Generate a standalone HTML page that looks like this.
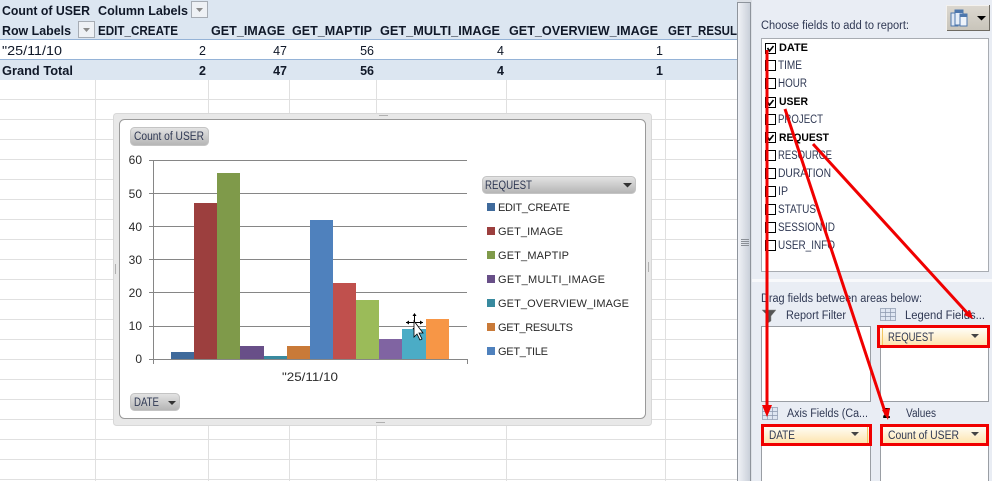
<!DOCTYPE html>
<html><head><meta charset="utf-8"><style>
html,body{margin:0;padding:0;background:#fff;width:992px;height:481px;overflow:hidden}
svg{display:block}
text{font-family:"Liberation Sans",sans-serif;font-size:12.5px;fill:#101828}
.b{font-weight:bold}
.c{fill:#2a2a2a;font-size:12px}
.l{fill:#2a2a2a;font-size:11px}
.f{fill:#2f3853;font-size:11.5px}
.k{fill:#000;font-size:11px;font-weight:bold}
</style></head><body>
<svg width="992" height="481" viewBox="0 0 992 481" xmlns="http://www.w3.org/2000/svg">
<defs>
<linearGradient id="pb" x1="0" y1="0" x2="0" y2="1"><stop offset="0" stop-color="#e4e4e4"/><stop offset="1" stop-color="#b4b4b4"/></linearGradient>
<linearGradient id="sb" x1="0" y1="0" x2="1" y2="0"><stop offset="0" stop-color="#f2f4f8"/><stop offset="1" stop-color="#c8ced8"/></linearGradient>
<linearGradient id="yb" x1="0" y1="0" x2="0" y2="1"><stop offset="0" stop-color="#fffef8"/><stop offset="1" stop-color="#fde3ab"/></linearGradient>
<linearGradient id="mb" x1="0" y1="0" x2="0" y2="1"><stop offset="0" stop-color="#dcd8d0"/><stop offset="1" stop-color="#c8c4ba"/></linearGradient>
</defs>
<rect width="992" height="481" fill="#fff"/>
<!-- grid -->
<g stroke="#e0e0e0" stroke-width="1">
<path d="M0 99.5H737M0 119.5H737M0 139.5H737M0 159.5H737M0 179.5H737M0 199.5H737M0 219.5H737M0 239.5H737M0 259.5H737M0 279.5H737M0 299.5H737M0 319.5H737M0 339.5H737M0 359.5H737M0 379.5H737M0 399.5H737M0 419.5H737M0 439.5H737M0 459.5H737M0 479.5H737"/>
<path d="M95.500 80V481M208.500 80V481M289.500 80V481M376.500 80V481M506.500 80V481M665.500 80V481"/>
</g>
<!-- pivot bands -->
<rect x="0" y="0" width="737" height="40" fill="#dce6f1"/>
<rect x="0" y="60" width="737" height="20" fill="#dce6f1"/>
<rect x="0" y="39" width="737" height="1" fill="#95b3d7"/>
<rect x="0" y="59" width="737" height="1" fill="#95b3d7"/>
<g>
<text class="b" x="2" y="15" textLength="88" lengthAdjust="spacingAndGlyphs">Count of USER</text>
<text class="b" x="98" y="15" textLength="90" lengthAdjust="spacingAndGlyphs">Column Labels</text>
<text class="b" x="2" y="35" textLength="69" lengthAdjust="spacingAndGlyphs">Row Labels</text>
<text class="b" x="98" y="35" textLength="80" lengthAdjust="spacingAndGlyphs">EDIT_CREATE</text>
<text class="b" x="211" y="35" textLength="74" lengthAdjust="spacingAndGlyphs">GET_IMAGE</text>
<text class="b" x="292" y="35" textLength="80" lengthAdjust="spacingAndGlyphs">GET_MAPTIP</text>
<text class="b" x="380" y="35" textLength="120" lengthAdjust="spacingAndGlyphs">GET_MULTI_IMAGE</text>
<text class="b" x="509" y="35" textLength="149" lengthAdjust="spacingAndGlyphs">GET_OVERVIEW_IMAGE</text>
<text class="b" x="668" y="35" textLength="69" lengthAdjust="spacingAndGlyphs">GET_RESUL</text>
<text x="2" y="55" textLength="60" lengthAdjust="spacingAndGlyphs">"25/11/10</text>
<text x="206" y="55" text-anchor="end">2</text><text x="287" y="55" text-anchor="end">47</text><text x="374" y="55" text-anchor="end">56</text><text x="504" y="55" text-anchor="end">4</text><text x="663" y="55" text-anchor="end">1</text>
<text class="b" x="2" y="75" textLength="71" lengthAdjust="spacingAndGlyphs">Grand Total</text>
<text class="b" x="206" y="75" text-anchor="end">2</text><text class="b" x="287" y="75" text-anchor="end">47</text><text class="b" x="374" y="75" text-anchor="end">56</text><text class="b" x="504" y="75" text-anchor="end">4</text><text class="b" x="663" y="75" text-anchor="end">1</text>
</g>
<!-- filter buttons -->
<rect x="191.500" y="1.500" width="16" height="16" fill="#eef1f5" stroke="#a6acb4"/><path d="M196 8h7l-3.500 4z" fill="#8a8a8a"/>
<rect x="78.500" y="21.500" width="16" height="16" fill="#eef1f5" stroke="#a6acb4"/><path d="M83 28h7l-3.500 4z" fill="#8a8a8a"/>
<!-- chart frame -->
<rect x="113.500" y="113.500" width="538" height="312" rx="3" fill="#e8e8e8" stroke="#d8d8d8"/>
<rect x="119.500" y="119.500" width="526" height="299" rx="5" fill="#fff" stroke="#9a9a9a"/>
<g fill="#b0b0b0"><rect x="379" y="115" width="9" height="1"/><rect x="115" y="264" width="1" height="10"/><rect x="648" y="262" width="1" height="10"/><rect x="376" y="422" width="9" height="1"/></g>
<!-- plot -->
<g stroke="#868686" stroke-width="1">
<path d="M149 160.500H467M149 193.500H467M149 226.500H467M149 259.500H467M149 292.500H467M149 326.500H467M149 359.500H467"/>
<path d="M153.500 160V364M467.500 359V364"/>
</g>
<g>
<rect x="171" y="352" width="23" height="7" fill="#3f6a9b"/>
<rect x="194" y="203" width="23" height="156" fill="#9c3f3e"/>
<rect x="217" y="173" width="23" height="186" fill="#7f9a4a"/>
<rect x="240" y="346" width="24" height="13" fill="#684f88"/>
<rect x="264" y="356" width="23" height="3" fill="#388a9f"/>
<rect x="287" y="346" width="23" height="13" fill="#c97a38"/>
<rect x="310" y="220" width="23" height="139" fill="#4f81bd"/>
<rect x="333" y="283" width="23" height="76" fill="#c0504d"/>
<rect x="356" y="300" width="23" height="59" fill="#9bbb59"/>
<rect x="379" y="339" width="23" height="20" fill="#8064a2"/>
<rect x="402" y="329" width="24" height="30" fill="#4bacc6"/>
<rect x="426" y="319" width="23" height="40" fill="#f79646"/>
</g>
<g>
<text class="c" x="142" y="164" text-anchor="end">60</text><text class="c" x="142" y="198" text-anchor="end">50</text><text class="c" x="142" y="231" text-anchor="end">40</text><text class="c" x="142" y="264" text-anchor="end">30</text><text class="c" x="142" y="297" text-anchor="end">20</text><text class="c" x="142" y="330" text-anchor="end">10</text><text class="c" x="142" y="363" text-anchor="end">0</text>
</g>
<text class="c" x="282" y="381" textLength="56" lengthAdjust="spacingAndGlyphs">"25/11/10</text>
<!-- chart field buttons -->
<rect x="130.500" y="127.500" width="78" height="18" rx="4" fill="url(#pb)" stroke="#c4c4c4"/>
<text class="f" x="134" y="140" textLength="70" lengthAdjust="spacingAndGlyphs">Count of USER</text>
<rect x="130.500" y="393.500" width="49" height="17" rx="4" fill="url(#pb)" stroke="#c4c4c4"/>
<text class="f" x="134" y="406" textLength="25" lengthAdjust="spacingAndGlyphs">DATE</text>
<path d="M168 401h8l-4 4z" fill="#333"/>
<rect x="482.500" y="176.500" width="153" height="17" rx="4" fill="url(#pb)" stroke="#c4c4c4"/>
<text class="f" x="485" y="189" textLength="47" lengthAdjust="spacingAndGlyphs">REQUEST</text>
<path d="M623 183h9l-4.500 4.500z" fill="#333"/>
<!-- legend -->
<g>
<rect x="487" y="203" width="8" height="8" fill="#3f6a9b"/><rect x="487" y="227" width="8" height="8" fill="#9c3f3e"/><rect x="487" y="251" width="8" height="8" fill="#7f9a4a"/><rect x="487" y="275" width="8" height="8" fill="#684f88"/><rect x="487" y="299" width="8" height="8" fill="#388a9f"/><rect x="487" y="323" width="8" height="8" fill="#c97a38"/><rect x="487" y="347" width="8" height="8" fill="#4f81bd"/>
<text class="l" x="498" y="211" textLength="72" lengthAdjust="spacing">EDIT_CREATE</text>
<text class="l" x="498" y="235" textLength="65" lengthAdjust="spacing">GET_IMAGE</text>
<text class="l" x="498" y="259" textLength="71" lengthAdjust="spacing">GET_MAPTIP</text>
<text class="l" x="498" y="283" textLength="107" lengthAdjust="spacing">GET_MULTI_IMAGE</text>
<text class="l" x="498" y="307" textLength="131" lengthAdjust="spacing">GET_OVERVIEW_IMAGE</text>
<text class="l" x="498" y="331" textLength="75" lengthAdjust="spacing">GET_RESULTS</text>
<text class="l" x="498" y="355" textLength="50" lengthAdjust="spacing">GET_TILE</text>
</g>
<!-- cursor -->
<path d="M414.500 314V332M406 322.500H423" stroke="#000" stroke-width="1"/>
<path d="M414.500 313l-2 3h4zM414.500 331l-2-3h4zM406 322.500l3-2v4zM423 322.500l-3-2v4z" fill="#000"/>
<path d="M414 321l0 16 3-3 3 6 2-1-3-6 4 0z" fill="#fff" stroke="#000" stroke-width=".8"/>
<!-- scrollbar -->
<rect x="737" y="0" width="15" height="481" fill="#dce0e6"/>
<rect x="737.500" y="2.500" width="13" height="479" fill="url(#sb)" stroke="#8e949c"/>
<rect x="741" y="239" width="8" height="1" fill="#8a8f96"/><rect x="741" y="241" width="8" height="1" fill="#8a8f96"/><rect x="741" y="243" width="8" height="1" fill="#8a8f96"/><rect x="741" y="245" width="8" height="1" fill="#8a8f96"/>
<!-- right panel -->
<rect x="752" y="0" width="240" height="481" fill="#e9edf4"/>
<rect x="752" y="279" width="240" height="3" fill="#f8f9fb"/>
<text class="f" x="761" y="29" textLength="148" lengthAdjust="spacingAndGlyphs">Choose fields to add to report:</text>
<rect x="946.500" y="5.500" width="43" height="25" fill="url(#mb)" stroke="#f4f2ee"/>
<path d="M947 30.500H989.500V5" stroke="#6e6a62" fill="none"/>
<g>
<rect x="951" y="13" width="7" height="13" fill="#dfe8f5" stroke="#4d77ad" stroke-width="1"/>
<rect x="955" y="10" width="8" height="15" fill="#e6eef8" stroke="#4d77ad" stroke-width="1"/>
<rect x="960" y="14" width="7" height="12" fill="#eef3fa" stroke="#4d77ad" stroke-width="1"/>
<rect x="955" y="10" width="8" height="3" fill="#4d77ad"/><rect x="960" y="14" width="7" height="3" fill="#4d77ad"/>
<path d="M977 16h9l-4.500 4.500z" fill="#000"/>
</g>
<rect x="761.500" y="38.500" width="227" height="233" fill="#fff" stroke="#a8acb2"/>
<!-- field list -->
<g fill="#fff" stroke="#000" stroke-width="1">
<rect x="765.500" y="43.500" width="10" height="10"/><rect x="765.500" y="60.500" width="10" height="10"/><rect x="765.500" y="78.500" width="10" height="10"/><rect x="765.500" y="97.500" width="10" height="10"/><rect x="765.500" y="114.500" width="10" height="10"/><rect x="765.500" y="132.500" width="10" height="10"/><rect x="765.500" y="150.500" width="10" height="10"/><rect x="765.500" y="168.500" width="10" height="10"/><rect x="765.500" y="186.500" width="10" height="10"/><rect x="765.500" y="204.500" width="10" height="10"/><rect x="765.500" y="222.500" width="10" height="10"/><rect x="765.500" y="240.500" width="10" height="10"/>
</g>
<path d="M767.500 48l2 3 4-5M767.500 102l2 3 4-5M767.500 137l2 3 4-5" fill="none" stroke="#000" stroke-width="1.600"/>
<g>
<text class="k" x="779" y="51" textLength="29" lengthAdjust="spacingAndGlyphs">DATE</text>
<text class="f" x="778" y="69" textLength="24" lengthAdjust="spacingAndGlyphs">TIME</text>
<text class="f" x="778" y="87" textLength="29" lengthAdjust="spacingAndGlyphs">HOUR</text>
<text class="k" x="779" y="105" textLength="29" lengthAdjust="spacingAndGlyphs">USER</text>
<text class="f" x="778" y="123" textLength="45" lengthAdjust="spacingAndGlyphs">PROJECT</text>
<text class="k" x="779" y="141" textLength="50" lengthAdjust="spacingAndGlyphs">REQUEST</text>
<text class="f" x="778" y="159" textLength="54" lengthAdjust="spacingAndGlyphs">RESOURCE</text>
<text class="f" x="778" y="177" textLength="53" lengthAdjust="spacingAndGlyphs">DURATION</text>
<text class="f" x="778" y="195" textLength="10" lengthAdjust="spacingAndGlyphs">IP</text>
<text class="f" x="778" y="213" textLength="38" lengthAdjust="spacingAndGlyphs">STATUS</text>
<text class="f" x="778" y="231" textLength="57" lengthAdjust="spacingAndGlyphs">SESSION ID</text>
<text class="f" x="778" y="249" textLength="57" lengthAdjust="spacingAndGlyphs">USER_INFO</text>
</g>
<text class="f" x="761" y="302" textLength="161" lengthAdjust="spacingAndGlyphs">Drag fields between areas below:</text>
<!-- area labels & icons -->
<path d="M762 310h14l-5 6v5l-3 2v-7z" fill="#555" stroke="#888" stroke-width=".5"/>
<text class="f" x="786" y="319" textLength="60" lengthAdjust="spacingAndGlyphs">Report Filter</text>
<g fill="#dfe6f2" stroke="#8a97ad" stroke-width=".7"><rect x="880.500" y="308.500" width="15" height="12"/><path d="M880.500 312.500h15M880.500 316.500h15M885.500 308.500v12M890.500 308.500v12" fill="none"/></g>
<text class="f" x="905" y="319" textLength="80" lengthAdjust="spacingAndGlyphs">Legend Fields...</text>
<g fill="#dfe6f2" stroke="#8a97ad" stroke-width=".7"><rect x="762.500" y="407.500" width="15" height="12"/><path d="M762.500 411.500h15M762.500 415.500h15M767.500 407.500v12M772.500 407.500v12" fill="none"/></g>
<text class="f" x="787" y="417" textLength="81" lengthAdjust="spacingAndGlyphs">Axis Fields (Ca...</text>
<text x="882" y="418" style="font-size:13px;font-weight:bold;fill:#000;font-family:'DejaVu Sans',sans-serif">Σ</text>
<text class="f" x="906" y="417" textLength="30" lengthAdjust="spacingAndGlyphs">Values</text>
<!-- area boxes -->
<g fill="#fff" stroke="#9a9ea4">
<rect x="761.500" y="326.500" width="109" height="75"/>
<rect x="880.500" y="326.500" width="108" height="75"/>
<rect x="761.500" y="424.500" width="109" height="60"/>
<rect x="880.500" y="424.500" width="108" height="60"/>
</g>
<!-- field pills -->
<rect x="878" y="328" width="110" height="18" fill="url(#yb)"/>
<rect x="763" y="426" width="107" height="18" fill="url(#yb)"/>
<rect x="881" y="426" width="107" height="18" fill="url(#yb)"/>
<rect x="882" y="328" width="1" height="18" fill="#f2c661"/><rect x="867" y="427" width="1" height="16" fill="#f2c661"/>
<text class="f" x="888" y="341" textLength="46" lengthAdjust="spacingAndGlyphs">REQUEST</text>
<text class="f" x="769" y="439" textLength="26" lengthAdjust="spacingAndGlyphs">DATE</text>
<text class="f" x="888" y="439" textLength="71" lengthAdjust="spacingAndGlyphs">Count of USER</text>
<path d="M971 334h8l-4 4zM851 432h8l-4 4zM971 432h8l-4 4z" fill="#444"/>
<!-- red annotation boxes -->
<g fill="none" stroke="#f00000" stroke-width="3">
<rect x="878.500" y="326.500" width="110" height="20"/>
<rect x="762.500" y="425.500" width="108" height="19"/>
<rect x="881.500" y="425.500" width="106" height="19"/>
</g>
<!-- red arrows -->
<g fill="none" stroke="#f00000" stroke-width="3">
<path d="M767 50V407"/>
<path d="M785 109L886 415"/>
<path d="M813 144L970 316"/>
</g>
<g fill="#f00000">
<path d="M762 405h10l-5 12z"/>
<path d="M882 410l8-2 -2 12z"/>
<path d="M964 315l6-5 3 9z"/>
</g>
</svg>
</body></html>
